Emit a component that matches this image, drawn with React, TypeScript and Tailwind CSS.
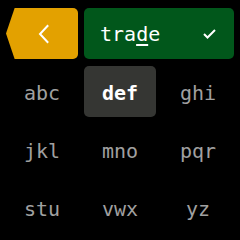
import React from "react";

const keys = ["abc", "def", "ghi", "jkl", "mno", "pqr", "stu", "vwx", "yz"];

export default function App() {
  return (
    <div
      className="w-[240px] h-[240px] bg-black overflow-hidden"
      style={{ fontFamily: '"DejaVu Sans Mono", monospace' }}
    >
      <div className="grid grid-cols-3 gap-x-[6px] gap-y-[7px] px-[6px] pt-[8px]">
        <div className="h-[51px] bg-[#e3a100] rounded-r-[5px] flex items-center justify-center pl-[4px] [clip-path:polygon(12%_0,100%_0,100%_100%,12%_100%,0_50%)]">
          <svg width="14" height="20" viewBox="0 0 14 20" fill="none">
            <path d="M10.5 2 L3 10 L10.5 18" stroke="white" strokeWidth="2" strokeLinecap="square" />
          </svg>
        </div>
        <div className="col-span-2 h-[51px] bg-[#01571b] rounded-[5px] flex items-center justify-between pl-[16px] pr-[18px]">
          <span className="text-[20px] leading-none text-white tracking-[0px] mt-[1px]">
            tra
            <span className="underline decoration-2 underline-offset-[3px]">d</span>
            e
          </span>
          <svg width="13" height="10" viewBox="0 0 13 10" fill="none">
            <path d="M1 5 L4.5 8.5 L12 1" stroke="white" strokeWidth="2" />
          </svg>
        </div>
        {keys.map((k) => {
          const active = k === "def";
          return (
            <div
              key={k}
              className={
                active
                  ? "h-[51px] rounded-[5px] bg-[#353633] flex items-center justify-center text-white font-bold text-[20px] leading-none"
                  : "h-[51px] rounded-[5px] flex items-center justify-center text-[#a0a0a0] text-[20px] leading-none"
              }
            >
              <span className="mt-[3px]">{k}</span>
            </div>
          );
        })}
      </div>
    </div>
  );
}
